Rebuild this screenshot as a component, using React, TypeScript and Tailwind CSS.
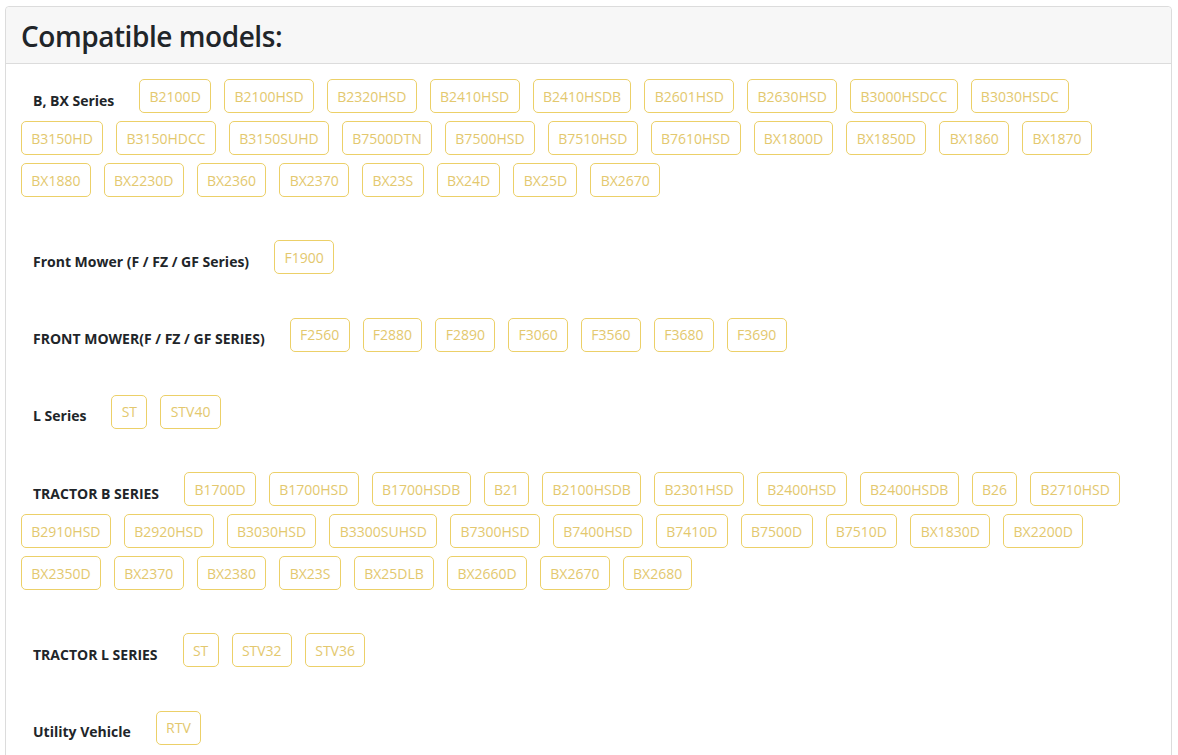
import React from 'react';

const groups: { label: string; models: string[] }[] = [
  {
    label: 'B, BX Series',
    models: [
      'B2100D', 'B2100HSD', 'B2320HSD', 'B2410HSD', 'B2410HSDB', 'B2601HSD', 'B2630HSD', 'B3000HSDCC', 'B3030HSDC',
      'B3150HD', 'B3150HDCC', 'B3150SUHD', 'B7500DTN', 'B7500HSD', 'B7510HSD', 'B7610HSD', 'BX1800D', 'BX1850D', 'BX1860', 'BX1870',
      'BX1880', 'BX2230D', 'BX2360', 'BX2370', 'BX23S', 'BX24D', 'BX25D', 'BX2670',
    ],
  },
  { label: 'Front Mower (F / FZ / GF Series)', models: ['F1900'] },
  { label: 'FRONT MOWER(F / FZ / GF SERIES)', models: ['F2560', 'F2880', 'F2890', 'F3060', 'F3560', 'F3680', 'F3690'] },
  { label: 'L Series', models: ['ST', 'STV40'] },
  {
    label: 'TRACTOR B SERIES',
    models: [
      'B1700D', 'B1700HSD', 'B1700HSDB', 'B21', 'B2100HSDB', 'B2301HSD', 'B2400HSD', 'B2400HSDB', 'B26', 'B2710HSD',
      'B2910HSD', 'B2920HSD', 'B3030HSD', 'B3300SUHSD', 'B7300HSD', 'B7400HSD', 'B7410D', 'B7500D', 'B7510D', 'BX1830D', 'BX2200D',
      'BX2350D', 'BX2370', 'BX2380', 'BX23S', 'BX25DLB', 'BX2660D', 'BX2670', 'BX2680',
    ],
  },
  { label: 'TRACTOR L SERIES', models: ['ST', 'STV32', 'STV36'] },
  { label: 'Utility Vehicle', models: ['RTV'] },
];

const App = () => {
  return (
    <div className="min-h-screen bg-white font-['Open_Sans',sans-serif]">
      <div className="ml-[5px] mt-[6px] w-[1167px] rounded border border-[#dcdcdc]">
        {/* Header */}
        <div className="h-[57px] border-b border-[#dcdcdc] bg-[#f7f7f7] px-[15px] rounded-t flex items-center">
          <h2 className="text-[28px] font-semibold leading-none tracking-[-0.45px] text-[#212529] pt-[2px]">Compatible models:</h2>
        </div>

        {/* Body */}
        <div className="px-[15px] pt-[15px] pb-6 flex flex-col gap-[43.3px]">
          {groups.map((g) => (
            <div key={g.label} className="flex flex-wrap gap-x-[13px] gap-y-2">
              <span className="h-[34px] px-3 pt-2 flex items-center text-[14px] font-bold text-[#212529]">
                {g.label}
              </span>
              {g.models.map((m, i) => (
                <span
                  key={m + i}
                  className="h-[34px] px-[9.3px] flex items-center rounded-[5px] border border-[#ecd068] text-[14px] text-[#e3c86e]"
                >
                  {m}
                </span>
              ))}
            </div>
          ))}
        </div>
      </div>
    </div>
  );
};

export default App;
